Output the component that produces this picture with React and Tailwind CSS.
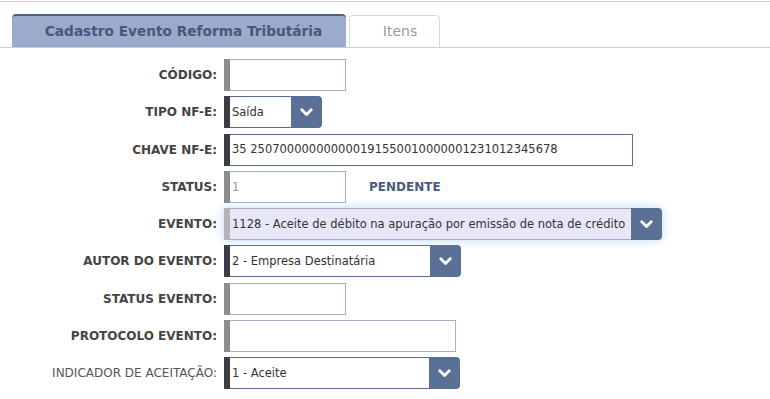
import React from "react";

const Chevron = () => (
  <svg width="13" height="9" viewBox="0 0 13 9" fill="none">
    <path d="M1.8 1.8 L6.5 6.5 L11.2 1.8" stroke="white" strokeWidth="2.8" strokeLinecap="round" strokeLinejoin="round" />
  </svg>
);

function Label({ children, bold = true }) {
  return (
    <div className={`text-right text-[12px] leading-none ${bold ? "font-bold text-[#444]" : "font-normal text-[#555]"}`}>
      {children}
    </div>
  );
}

function Input({ w, value, bar = "bg-[#8c8c8c]", border = "border-[#a3b0c8]", textColor = "text-[#333]" }) {
  return (
    <div className={`flex h-[32px] ${w}`}>
      <div className={`w-[6px] ${bar}`} />
      <div className={`flex-1 flex items-center border ${border} border-l-0 pl-[2px] pt-[1px] text-[11.5px] ${textColor}`}>
        {value}
      </div>
    </div>
  );
}

function Select({ w, value, bar = "bg-[#3d3d45]", bg = "bg-white", glow = false, border = "border-[#5b6e93]" }) {
  return (
    <div className={`flex h-[32px] ${w} rounded-r-[4px] ${glow ? "shadow-[0_0_8px_rgba(110,160,235,0.45)]" : ""}`}>
      <div className={`w-[6px] ${bar}`} />
      <div className={`flex-1 flex items-center border-y ${border} ${bg} pl-[2px] pt-[1px] text-[11.5px] text-[#333] whitespace-nowrap overflow-hidden`}>
        {value}
      </div>
      <div className="w-[31px] bg-[#5b7096] rounded-r-[4px] flex items-center justify-center">
        <Chevron />
      </div>
    </div>
  );
}

export default function App() {
  const rows = [
    [<Label>CÓDIGO:</Label>, <Input w="w-[122px]" />],
    [<Label>TIPO NF-E:</Label>, <Select w="w-[98px]" value="Saída" />],
    [
      <Label>CHAVE NF-E:</Label>,
      <Input w="w-[409px]" bar="bg-[#3d3d45]" border="border-[#5b6e93]" value="35 250700000000000191550010000001231012345678" />,
    ],
    [
      <Label>STATUS:</Label>,
      <div className="flex items-center">
        <Input w="w-[122px]" value="1" textColor="text-[#999]" />
        <div className="ml-[23px] text-[12px] font-bold text-[#4a5a7c]">PENDENTE</div>
      </div>,
    ],
    [
      <Label>EVENTO:</Label>,
      <Select
        w="w-[438px]"
        value="1128 - Aceite de débito na apuração por emissão de nota de crédito"
        bar="bg-[#b3b3b9]"
        bg="bg-[#e7e7f8]"
        border="border-[#a9a9b8]"
        glow
      />,
    ],
    [<Label>AUTOR DO EVENTO:</Label>, <Select w="w-[237px]" value="2 - Empresa Destinatária" />],
    [<Label>STATUS EVENTO:</Label>, <Input w="w-[122px]" />],
    [<Label>PROTOCOLO EVENTO:</Label>, <Input w="w-[232px]" />],
    [<Label bold={false}>INDICADOR DE ACEITAÇÃO:</Label>, <Select w="w-[236px]" value="1 - Aceite" />],
  ];

  return (
    <div className="w-[770px] h-[399px] bg-white overflow-hidden font-['DejaVu_Sans',sans-serif]">
      <div className="h-px mt-px bg-[#c8cdd6]" />
      <div className="flex items-end pl-[12px] gap-[3px] mt-[12px] border-b border-[#c8cdd6]">
        <div className="w-[334px] h-[33px] bg-[#9aabcc] border-t-2 border-[#4f6185] rounded-t-[4px] flex items-center justify-center pl-[9px] text-[13.7px] font-bold text-[#48577a]">
          Cadastro Evento Reforma Tributária
        </div>
        <div className="w-[91px] h-[32px] bg-white border border-b-0 border-[#d3d9e3] rounded-t-[4px] flex items-center justify-center pl-[11px] text-[14px] text-[#9a9a9a]">
          Itens
        </div>
      </div>
      <div className="grid grid-cols-[217px_1fr] gap-x-[7px] gap-y-[5.25px] mt-[11px] items-center">
        {rows.map((r, i) => (
          <React.Fragment key={i}>
            {r[0]}
            <div>{r[1]}</div>
          </React.Fragment>
        ))}
      </div>
    </div>
  );
}
